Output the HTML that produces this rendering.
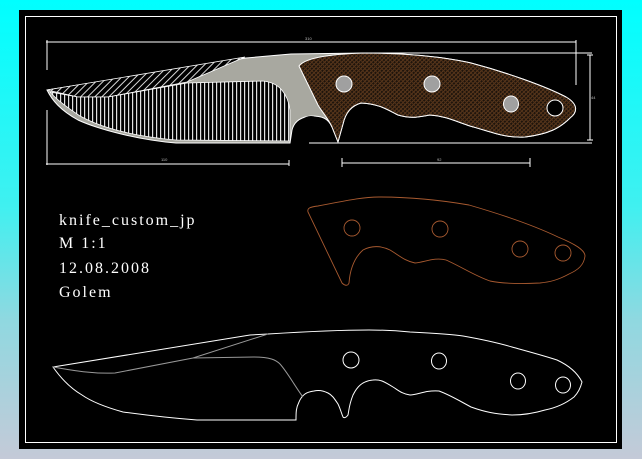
<!DOCTYPE html>
<html><head><meta charset="utf-8"><style>
html,body{margin:0;padding:0;width:642px;height:459px;overflow:hidden;background:linear-gradient(#00ffff 0%,#40f0f0 45%,#90d8e0 70%,#c4cad8 100%);}
svg{position:absolute;left:0;top:0}
</style></head><body>
<svg width="642" height="459" viewBox="0 0 642 459" xmlns="http://www.w3.org/2000/svg">
<defs>
<pattern id="vh" width="4" height="4" patternUnits="userSpaceOnUse"><rect width="4" height="4" fill="#000"/><rect x="0" width="1.2" height="4" fill="#e0e0e0"/></pattern>
<pattern id="dh" width="5" height="5" patternUnits="userSpaceOnUse" patternTransform="rotate(45)"><rect width="5" height="5" fill="#000"/><rect x="0" width="1" height="5" fill="#d8d8d8"/></pattern>
<pattern id="br" width="3" height="3" patternUnits="userSpaceOnUse" patternTransform="rotate(45)"><rect width="3" height="3" fill="#1e140c"/><rect width="1" height="3" fill="#5e3a1e"/><rect width="3" height="1" fill="#523218"/></pattern>
</defs>
<rect x="19" y="10" width="603" height="439" fill="#000"/>
<rect x="25.5" y="16.5" width="591" height="426" fill="none" stroke="#fff" stroke-width="1"/>

<g stroke="#fff" stroke-width="1" fill="none">
<path d="M46,42H576M47,40V70M576,40V85"/>
<path d="M47,110V165M46,164H289M289,160V166"/>
<path d="M342,163H530M342,158V167M530,158V167"/>
<path d="M365,53H592M309,143H592M590,55V140M587,55H593M587,140H593"/>
</g>
<g fill="#bbb" font-family="Liberation Sans,sans-serif" font-size="4">
<text x="305" y="40">310</text><text x="161" y="161">110</text><text x="437" y="161">92</text><text x="591" y="99">44</text>
</g>

<path d="M47,90 L246,58 L291,54 L365,53 C400,53 440,56 471,63 C505,72 545,86 566,97 C578,104 578,112 570,118 C560,128 549,134 525,137 C505,138 495,133 470,126 C455,121 445,116 430,115 C418,117 412,119 398,115 C388,110 380,104 361,103 C350,106 345,115 343,124 L338,142 L332,127 C328,118 322,116 311,116 C300,117 294,122 292,130 L290,143 L176,143 C140,140 100,130 78,120 C60,110 52,100 47,90Z" fill="#a8a8a0" stroke="#fff" stroke-width="1"/>
<path d="M47,90 L245,57 L187,82 L108,97 L78,97Z" fill="url(#dh)" stroke="#fff" stroke-width="0.8"/>
<path d="M50,92 L78,97 L108,97 L187,83 L262,81 C280,82 288,95 290,110 L290,141 L176,140 C130,136 100,127 80,116 C65,106 55,98 50,92Z" fill="url(#vh)" stroke="#fff" stroke-width="0.8"/>
<path d="M299,66 C305,58 330,54 365,53 C400,53 440,56 471,63 C505,72 545,86 566,97 C578,104 578,112 570,118 C560,128 549,134 525,137 C505,138 495,133 470,126 C455,121 445,116 430,115 C418,117 412,119 398,115 C388,110 380,104 361,103 C350,106 345,115 343,124 L338,142 L332,127 C328,118 322,112 318,105 Z" fill="url(#br)" stroke="#fff" stroke-width="1"/>
<circle cx="311" cy="129" r="13" fill="#000"/>
<g stroke="#fff" stroke-width="1">
<ellipse cx="344" cy="84" rx="8" ry="8" fill="#a0a0a0"/>
<ellipse cx="432" cy="84" rx="8" ry="8" fill="#a0a0a0"/>
<ellipse cx="511" cy="104" rx="7.5" ry="8" fill="#a0a0a0"/>
<ellipse cx="555" cy="108" rx="8" ry="8" fill="#000"/>
</g>

<g fill="#fff" font-family="Liberation Serif,serif" font-size="16" letter-spacing="2">
<text x="59" y="225">knife_custom_jp</text>
<text x="59" y="248">M 1:1</text>
<text x="59" y="273">12.08.2008</text>
<text x="59" y="297">Golem</text>
</g>

<g fill="none" stroke="#a85a30" stroke-width="0.9">
<path d="M308,212 C307,208 310,207 318,206 C340,202 360,197 379,197 C410,197 440,200 469,205 C500,214 535,226 558,237 C575,244 585,250 585,256 C584,265 578,270 569,274 C558,280 550,282 540,283 C520,284 504,284 490,281 C475,276 460,266 446,260 C435,257 425,262 415,263 C405,261 400,256 390,250 C382,246 372,245 363,250 C354,258 350,270 349,283 C348,286 345,286 342,283 Z"/>
<circle cx="352" cy="228" r="8"/><circle cx="440" cy="229" r="8"/><circle cx="520" cy="249" r="8"/><circle cx="563" cy="253" r="8"/>
</g>

<g fill="none" stroke="#fff" stroke-width="1">
<path d="M53,367 L250,335 L268,334 C300,332 340,330 369,330 C390,330 400,331 410,332 C430,333 450,334 463,336 C480,339 495,342 512,347 C530,352 545,356 557,360 C570,366 578,374 582,382 C580,390 577,394 574,397 C565,404 555,408 545,410 C535,413 522,415 512,415 C495,414 485,412 471,407 C458,400 450,395 439,391 C425,390 418,395 410,395 C402,394 398,390 393,387 C385,382 380,379 373,380 C362,381 357,387 353,395 C349,405 349,410 348,415 C346,418 344,418 343,417 C341,412 340,408 338,404 C334,398 332,395 328,393 C322,390 318,390 314,391 C306,392 302,395 299,402 C296,408 296,412 296,420 L197,420 C170,418 145,415 123,412 C105,407 92,402 82,395 C70,388 60,377 53,367Z"/>
<ellipse cx="351" cy="360" rx="8" ry="8"/><ellipse cx="439" cy="361" rx="7.5" ry="8"/><ellipse cx="518" cy="381" rx="7.5" ry="8"/><ellipse cx="563" cy="385" rx="7.5" ry="8"/>
</g>
<g fill="none" stroke="#999" stroke-width="1">
<path d="M53,367 C70,370 90,374 115,373 L193,358 L268,334"/>
<path d="M193,358 L254,357 C270,357 276,360 280,364 C288,373 296,388 303,397"/>
</g>
</svg>
</body></html>
